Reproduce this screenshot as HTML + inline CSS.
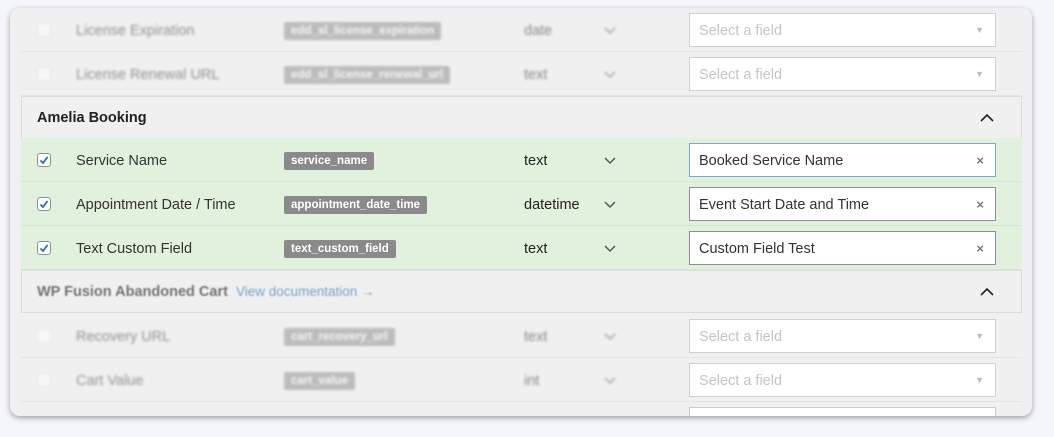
<!DOCTYPE html>
<html><head><style>
body{margin:0;width:1054px;height:437px;background:#f4f6f9;font-family:"Liberation Sans",sans-serif;overflow:hidden;position:relative}
.card{position:absolute;left:10px;top:8px;width:1022px;height:408px;background:#f0f0f0;border-radius:10px;box-shadow:0 2px 6px rgba(0,0,0,.35);overflow:hidden}
.row{position:absolute;left:11px;width:1001px;height:44px;border-bottom:1px solid #e4e4e4;box-sizing:border-box}
.g{background:#e1f1dd;border-bottom-color:#d4e8d0}
.blur .lab,.blur .tag,.blur .typ,.blur .chev,.blur .cb{filter:blur(1.2px);opacity:.5}
.blur .inp{border-color:#d0d0d0;color:#c4c4c4}
.blur .x{font-size:9px;color:#bbb;top:11px}
.cb{position:absolute;left:16px;top:15px;width:14px;height:14px;border:1px solid #8c8f94;border-radius:3px;background:#fff;box-sizing:border-box}
.cb svg{position:absolute;left:0;top:0}
.lab{position:absolute;left:55px;top:15px;font-size:14.5px;color:#333}
.tag{position:absolute;left:263px;top:14px;height:18px;line-height:18px;padding:0 7px;background:#8a8a8a;color:#fff;border-radius:2px;font-size:11.5px;font-weight:bold}
.typ{position:absolute;left:503px;top:15px;font-size:14.5px;color:#222}
.chev{position:absolute;left:583px;top:17px}
.inp{position:absolute;left:668px;top:5px;width:307px;height:34px;background:#fff;border:1px solid #8c8f94;box-sizing:border-box;font-size:14.5px;color:#333;padding:9px 0 0 9px}
.x{position:absolute;right:11px;top:9px;font-size:13px;color:#777;font-weight:bold}
.hdr{position:absolute;left:11px;width:1001px;height:43px;background:#f0f0f0;border:1px solid #dcdcdc;box-sizing:border-box}
.hdr b{position:absolute;left:15px;top:13px;font-size:14.5px;color:#222}
.up{position:absolute;left:958px;top:16px}
</style></head><body>
<div class="card">
<div class="row blur" style="top:0"><div class="cb" style="border-color:#ddd"></div><div class="lab">License Expiration</div><div class="tag">edd_sl_license_expiration</div><div class="typ">date</div><svg class="chev" width="12" height="10"><path d="M1 3l5 5 5-5" stroke="#555" fill="none" stroke-width="1.5"/></svg><div class="inp">Select a field<span class="x">▼</span></div></div>
<div class="row blur" style="top:44px"><div class="cb" style="border-color:#ddd"></div><div class="lab">License Renewal URL</div><div class="tag">edd_sl_license_renewal_url</div><div class="typ">text</div><svg class="chev" width="12" height="10"><path d="M1 3l5 5 5-5" stroke="#555" fill="none" stroke-width="1.5"/></svg><div class="inp">Select a field<span class="x">▼</span></div></div>
<div class="hdr" style="top:88px"><b>Amelia Booking</b><svg class="up" width="14" height="10"><path d="M1 8l6-6 6 6" stroke="#222" fill="none" stroke-width="1.6"/></svg></div>
<div class="row g" style="top:130px"><div class="cb"><svg width="12" height="12"><path d="M2.5 6.5l2.5 2.5 4.5-6" stroke="#2271b1" fill="none" stroke-width="1.8"/></svg></div><div class="lab">Service Name</div><div class="tag">service_name</div><div class="typ">text</div><svg class="chev" width="12" height="10"><path d="M1 3l5 5 5-5" stroke="#555" fill="none" stroke-width="1.5"/></svg><div class="inp" style="border-color:#7fa6c4">Booked Service Name<span class="x">×</span></div></div>
<div class="row g" style="top:174px"><div class="cb"><svg width="12" height="12"><path d="M2.5 6.5l2.5 2.5 4.5-6" stroke="#2271b1" fill="none" stroke-width="1.8"/></svg></div><div class="lab">Appointment Date / Time</div><div class="tag">appointment_date_time</div><div class="typ">datetime</div><svg class="chev" width="12" height="10"><path d="M1 3l5 5 5-5" stroke="#555" fill="none" stroke-width="1.5"/></svg><div class="inp">Event Start Date and Time<span class="x">×</span></div></div>
<div class="row g" style="top:218px"><div class="cb"><svg width="12" height="12"><path d="M2.5 6.5l2.5 2.5 4.5-6" stroke="#2271b1" fill="none" stroke-width="1.8"/></svg></div><div class="lab">Text Custom Field</div><div class="tag">text_custom_field</div><div class="typ">text</div><svg class="chev" width="12" height="10"><path d="M1 3l5 5 5-5" stroke="#555" fill="none" stroke-width="1.5"/></svg><div class="inp">Custom Field Test<span class="x">×</span></div></div>
<div class="hdr" style="top:262px"><b style="filter:blur(.8px);opacity:.6">WP Fusion Abandoned Cart <span style="font-weight:normal;color:#2271b1;font-size:13.5px;margin-left:4px">View documentation →</span></b><svg class="up" width="14" height="10"><path d="M1 8l6-6 6 6" stroke="#222" fill="none" stroke-width="1.6"/></svg></div>
<div class="row blur" style="top:306px"><div class="cb" style="border-color:#ddd"></div><div class="lab">Recovery URL</div><div class="tag">cart_recovery_url</div><div class="typ">text</div><svg class="chev" width="12" height="10"><path d="M1 3l5 5 5-5" stroke="#555" fill="none" stroke-width="1.5"/></svg><div class="inp">Select a field<span class="x">▼</span></div></div>
<div class="row blur" style="top:350px"><div class="cb" style="border-color:#ddd"></div><div class="lab">Cart Value</div><div class="tag">cart_value</div><div class="typ">int</div><svg class="chev" width="12" height="10"><path d="M1 3l5 5 5-5" stroke="#555" fill="none" stroke-width="1.5"/></svg><div class="inp">Select a field<span class="x">▼</span></div></div>
<div class="row" style="top:394px;border:none"><div class="inp" style="border-color:#ccc"></div></div>
</div>
</body></html>
